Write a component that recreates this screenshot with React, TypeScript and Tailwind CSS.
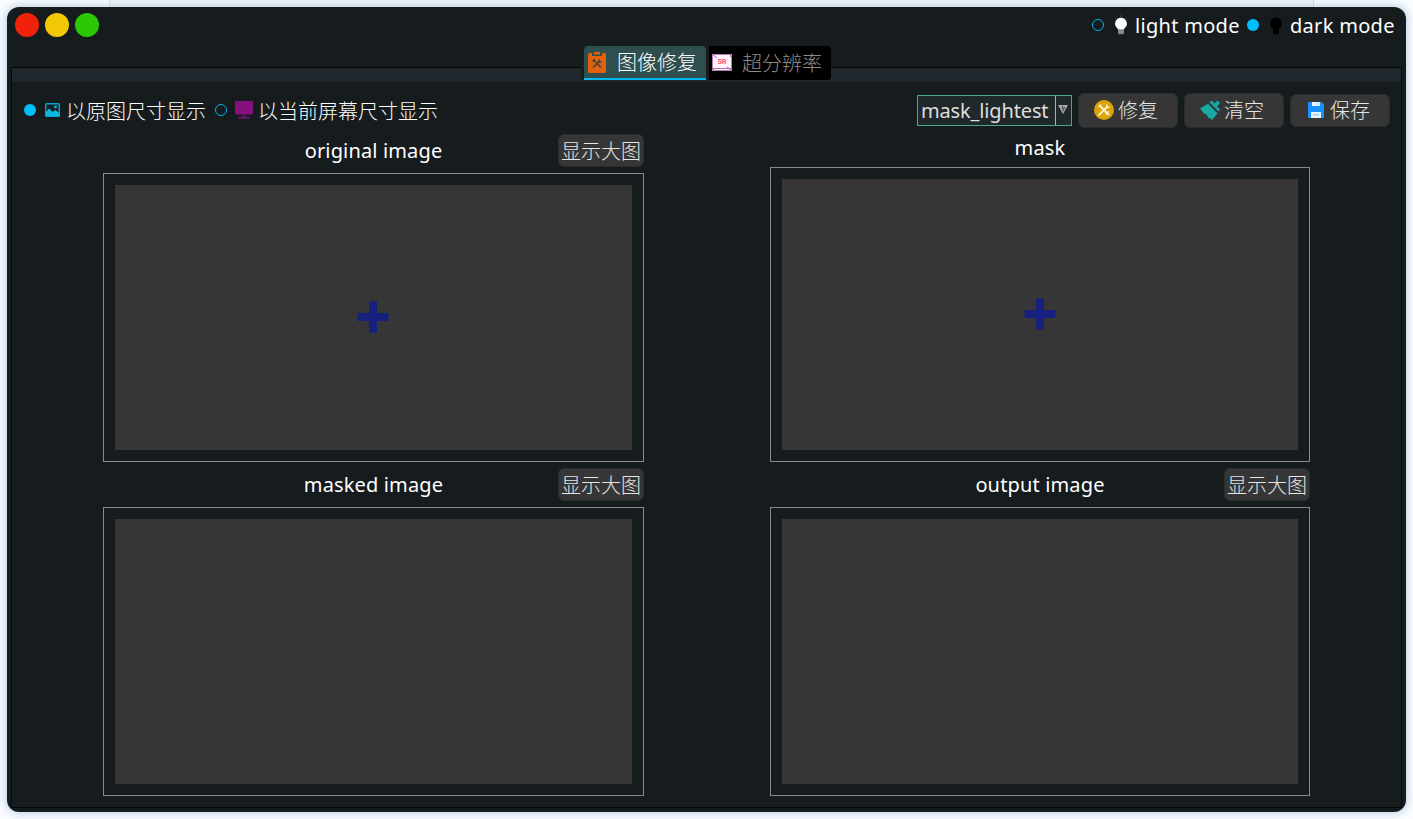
import type { ReactNode } from "react";

function Radio({ checked }: { checked?: boolean }) {
  return (
    <span
      className={
        checked
          ? "size-3 shrink-0 rounded-full bg-[#00bfff]"
          : "size-3 shrink-0 rounded-full border border-[#00b4f0]"
      }
    />
  );
}

function Bulb({ color, base }: { color: string; base: string }) {
  return (
    <svg className="h-5 w-4 shrink-0" viewBox="0 0 16 20">
      <path d="M8 0v2M2 3l1 1M14 3l-1 1" stroke={base} strokeOpacity="0.45" />
      <path d="M8 2.800a5.900 5.900 0 0 1 3.900 10.300c-.8.700-1 1.200-1.100 1.700H5.200c-.1-.5-.3-1-1.100-1.700A5.900 5.900 0 0 1 8 2.800z" fill={color} />
      <path d="M5 14.600h6v3.900l-1 .8H6l-1-.8z" fill={base} />
    </svg>
  );
}

function PictureIcon() {
  return (
    <svg className="h-3.5 w-[15px] shrink-0" viewBox="0 0 15 14">
      <rect x="0.700" y="0.700" width="13.600" height="12.600" rx="0.800" fill="#152226" stroke="#06a5ca" strokeWidth="1.400" />
      <path d="M1 9l3.200-3.500L7.500 9l2.800-2L14 9.800V13H1z" fill="#08b8e0" />
      <circle cx="10.500" cy="4" r="1.400" fill="#08b8e0" />
    </svg>
  );
}

function MonitorIcon() {
  return (
    <svg className="h-[18px] w-[18px] shrink-0" viewBox="0 0 18 18">
      <rect width="18" height="13.500" rx="0.800" fill="#86117e" />
      <path d="M7 14.500h4v1.500h4v1.700H3V16h4z" fill="#6b1166" />
    </svg>
  );
}

function ClipboardIcon() {
  return (
    <svg className="h-[21px] w-[18px] shrink-0" viewBox="0 0 18 21">
      <rect y="1" width="18" height="20" rx="1.500" fill="#e0620d" />
      <path d="M4 0h10v4H4z" fill="#2f4f4f" />
      <path d="M6 0h6v2.500H6z" fill="#e0620d" />
      <path d="M5.500 8l7.500 7.500M12 9l-7 6.500" stroke="#44443c" strokeWidth="1.700" />
      <path d="M4.500 9.500L7 7M11 7.500v2.500h2.500" stroke="#44443c" strokeWidth="1.500" fill="none" />
    </svg>
  );
}

function SrIcon() {
  return (
    <svg className="h-[17px] w-5 shrink-0" viewBox="0 0 20 17">
      <rect width="20" height="17" fill="#fff5fb" />
      <path d="M.5.500h19v16H.5z" fill="none" stroke="#bb78b8" />
      <path d="M1 1l4 3M19 16l-4-3M1.500 16v-2M18.500 1v2M1 14.500h18" stroke="#9b4ca0" strokeWidth="0.800" />
      <text x="10" y="10" textAnchor="middle" fontSize="6.500" fontWeight="700" fill="#f3526a" className="font-['Liberation_Sans',sans-serif]">SR</text>
    </svg>
  );
}

function RepairIcon() {
  return (
    <svg className="size-5 shrink-0" viewBox="0 0 20 20">
      <circle cx="10" cy="10" r="10" fill="#dca406" />
      <path d="M6 6l8.500 8.500" stroke="#fff3cf" strokeWidth="2" strokeLinecap="round" />
      <path d="M13 7l-8 8" stroke="#fff3cf" strokeWidth="1.800" strokeLinecap="round" />
      <path d="M4.500 7L7 4.500M12.800 4.500v2.700h2.700" stroke="#fff3cf" strokeWidth="1.500" fill="none" />
      <path d="M11.500 14.500l3-3" stroke="#fff3cf" strokeWidth="1.400" />
    </svg>
  );
}

function BrushIcon() {
  return (
    <svg className="size-5 shrink-0" viewBox="0 0 20 20" fill="#16a9a6">
      <path d="M0 8.500L8 3.800 17.500 13.500 12 20 9.500 17.800 8.500 18.200 7 15 3.500 13z" />
      <path d="M9.300 2.300L12 .7l2.500 2.800L17.300.5 20 3l-3 3.500 3 3-1.500 2z" />
    </svg>
  );
}

function SaveIcon() {
  return (
    <svg className="size-4 shrink-0" viewBox="0 0 16 16">
      <path d="M0 1a1 1 0 0 1 1-1h12.500L16 2.500V15a1 1 0 0 1-1 1H1a1 1 0 0 1-1-1z" fill="#1890ff" />
      <path d="M4 0h8v4H4z" fill="#e6f4ff" />
      <path d="M9 1h1.500v2H9z" fill="#a8d4f8" />
      <path d="M3 10h10v6H3z" fill="#e6f4ff" />
      <path d="M5 12h6v1.500H5z" fill="#9bd0f5" />
    </svg>
  );
}

function PlusIcon() {
  return (
    <svg className="size-8" viewBox="0 0 32 32">
      <path d="M12 .5h8V12h11.500v8H20v11.500h-8V20H.5v-8H12z" fill="#15207f" />
    </svg>
  );
}

function ToolButton({ icon, children, className }: { icon: ReactNode; children: ReactNode; className: string }) {
  return (
    <button className={`flex w-[100px] items-center rounded-md border border-[#282d30] bg-[#363636] font-light text-[#e6e6e6] ${className}`}>
      {icon}
      <span className="pt-0.5">{children}</span>
    </button>
  );
}

function Header({ title, enlarge }: { title: string; enlarge?: boolean }) {
  return (
    <div className={`grid shrink-0 grid-cols-[86px_1fr_86px] items-center ${enlarge ? "h-[31px]" : "h-[25px]"}`}>
      <span className="col-start-2 text-center tracking-[0.15px] text-white">{title}</span>
      {enlarge && (
        <button className="-mt-px h-[33px] rounded-md border border-[#282d30] bg-[#363636] pt-0.5 font-light text-[#e6e6e6]">显示大图</button>
      )}
    </div>
  );
}

function Frame({ plus, className }: { plus?: boolean; className: string }) {
  return (
    <div className={`mt-[7px] flex shrink-0 border border-[#868a8c] p-[11px] ${className}`}>
      <div className="flex flex-1 items-center justify-center bg-[#363636] pr-px pb-0.5">{plus && <PlusIcon />}</div>
    </div>
  );
}

export default function App() {
  return (
    <div className="flex h-[819px] w-[1413px] flex-col overflow-hidden bg-[#fafcff] font-['Noto_Sans','Noto_Sans_CJK_SC',sans-serif] text-[20px] leading-6 whitespace-nowrap text-white">
      <div className="mx-[109px] h-[7px] w-[1205px] shrink-0 border-x border-[#d5dce3] bg-[#f0f3f6]" />
      <main className="ml-[7px] flex h-[805px] w-[1399px] shrink-0 flex-col rounded-xl bg-[#161b1e] px-1 pb-1 shadow-[0_0_9px_1px_#b4cce4]">
        <header className="flex h-[39px] shrink-0 items-start justify-between pr-[7px] pl-1">
          <div className="flex gap-1.5 pt-1.5">
            <span className="size-6 rounded-full bg-[#f0230a]" />
            <span className="size-6 rounded-full bg-[#f3c905]" />
            <span className="size-6 rounded-full bg-[#2bc703]" />
          </div>
          <div className="flex h-9 items-center tracking-[0.300px]">
            <Radio />
            <span className="ml-[9px] flex items-center gap-1.5"><Bulb color="#ffffff" base="#85898b" /><span className="w-[105px] pt-0.5">light mode</span></span>
            <span className="ml-[7px] flex"><Radio checked /></span>
            <span className="ml-[9px] flex items-center gap-1.5"><Bulb color="#000000" base="#000000" /><span className="w-[105px] pt-0.5">dark mode</span></span>
          </div>
        </header>

        <nav className="z-10 mb-[-13px] flex h-[34px] shrink-0 pl-[570px] font-light">
          <div className="flex bg-[#161b1e] pl-[3px]">
            <div className="flex w-[122px] items-center rounded-t border-b-2 border-[#00b8f5] bg-[#2f4f4f] pl-1">
              <ClipboardIcon /><span className="ml-[11px] pt-0.5">图像修复</span>
            </div>
            <div className="ml-[3px] flex w-[122px] items-center rounded-r bg-black pb-0.5 pl-[3px] text-[#8c8c8c]">
              <SrIcon /><span className="ml-[10px] pt-1">超分辨率</span>
            </div>
          </div>
        </nav>

        <section className="flex flex-1 flex-col border border-[#050708]">
          <div className="h-3.5 shrink-0 bg-[#20282d]" />
          <div className="mt-2.5 flex h-9 shrink-0 items-center pr-[11px] pl-3">
            <Radio checked />
            <span className="ml-[9px] flex items-center"><PictureIcon /><span className="ml-[6px] pt-1 font-light">以原图尺寸显示</span></span>
            <span className="ml-[9px] flex"><Radio /></span>
            <span className="ml-2 flex items-center"><MonitorIcon /><span className="ml-[5px] pt-1 font-light">以当前屏幕尺寸显示</span></span>
            <div className="ml-auto flex items-center gap-1.5">
              <div className="flex h-[31px] w-[155px] border border-[#4ea78c] bg-[#20282b] text-[#dedede]">
                <span className="w-[137px] pt-[3px] pl-[3px] tracking-[-0.150px]">mask_lightest</span>
                <span className="flex flex-1 justify-center border-l border-[#aab0b0] pt-2">
                  <svg className="mr-0.5 h-[11px] w-3" viewBox="0 0 12 11">
                    <path d="M1 1h10L6 10z" fill="#a5a9a9" />
                    <path d="M5.500 2v3M7.500 3L6 7" stroke="#30373a" />
                  </svg>
                </span>
              </div>
              <ToolButton icon={<RepairIcon />} className="h-[35px] gap-1 pl-[15px]">修复</ToolButton>
              <ToolButton icon={<BrushIcon />} className="h-[35px] gap-1 pl-[15px]">清空</ToolButton>
              <ToolButton icon={<SaveIcon />} className="h-[33px] gap-1.5 pl-[17px]">保存</ToolButton>
            </div>
          </div>

          <div className="mt-[7px] flex gap-[126px] pl-[91px]">
            <div className="flex w-[541px] flex-col">
              <Header title="original image" enlarge />
              <Frame plus className="h-[289px]" />
              <div className="h-[7px]" />
              <Header title="masked image" enlarge />
              <Frame className="h-[289px]" />
            </div>
            <div className="flex w-[540px] flex-col">
              <Header title="mask" />
              <Frame plus className="h-[295px]" />
              <div className="h-[7px]" />
              <Header title="output image" enlarge />
              <Frame className="h-[289px]" />
            </div>
          </div>
        </section>
      </main>
    </div>
  );
}
